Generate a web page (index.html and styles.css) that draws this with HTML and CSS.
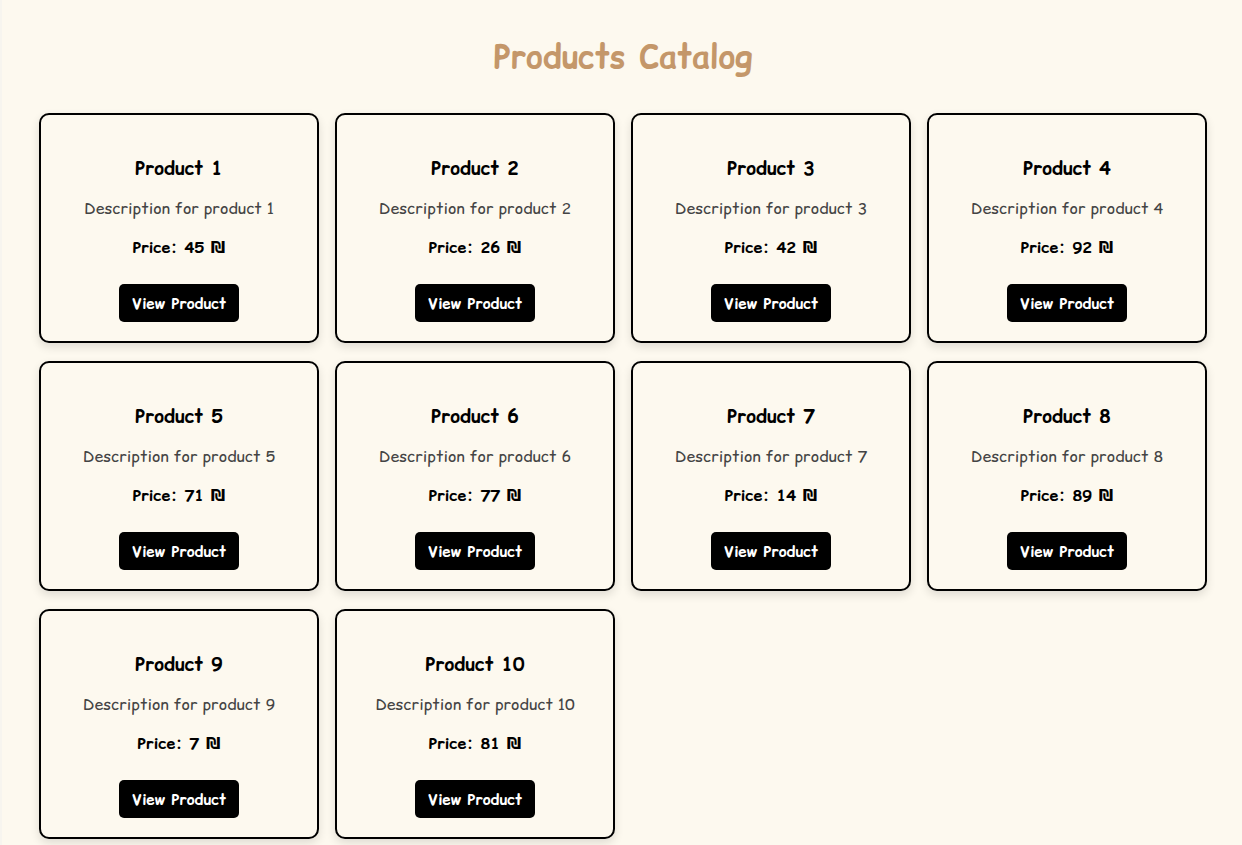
FILE: index.html
```html
<!DOCTYPE html>
<html>
<head>
<meta charset="utf-8">
<link rel="stylesheet" href="styles.css">
</head>
<body>
<div class="page">
  <h1 class="title">Products Catalog</h1>
  <div class="grid">
    <div class="card"><h3>Product 1</h3><p class="desc">Description for product 1</p><p class="price">Price: 45 ₪</p><button class="btn">View Product</button></div>
    <div class="card"><h3>Product 2</h3><p class="desc">Description for product 2</p><p class="price">Price: 26 ₪</p><button class="btn">View Product</button></div>
    <div class="card"><h3>Product 3</h3><p class="desc">Description for product 3</p><p class="price">Price: 42 ₪</p><button class="btn">View Product</button></div>
    <div class="card"><h3>Product 4</h3><p class="desc">Description for product 4</p><p class="price">Price: 92 ₪</p><button class="btn">View Product</button></div>
    <div class="card"><h3>Product 5</h3><p class="desc">Description for product 5</p><p class="price">Price: 71 ₪</p><button class="btn">View Product</button></div>
    <div class="card"><h3>Product 6</h3><p class="desc">Description for product 6</p><p class="price">Price: 77 ₪</p><button class="btn">View Product</button></div>
    <div class="card"><h3>Product 7</h3><p class="desc">Description for product 7</p><p class="price">Price: 14 ₪</p><button class="btn">View Product</button></div>
    <div class="card"><h3>Product 8</h3><p class="desc">Description for product 8</p><p class="price">Price: 89 ₪</p><button class="btn">View Product</button></div>
    <div class="card"><h3>Product 9</h3><p class="desc">Description for product 9</p><p class="price">Price: 7 ₪</p><button class="btn">View Product</button></div>
    <div class="card"><h3>Product 10</h3><p class="desc">Description for product 10</p><p class="price">Price: 81 ₪</p><button class="btn">View Product</button></div>
  </div>
</div>
</body>
</html>
```
FILE: styles.css
```css
html, body {
  margin: 0;
  padding: 0;
  background: #fdf9ef;
}
body {
  font-family: "Comic Relief", "DejaVu Sans", cursive;
  border-left: 2px solid #f7f5ef;
}
.page {
  padding: 20px 35px 20px 37px;
}
.title {
  margin: 16px 0 35px;
  text-align: center;
  font-size: 32px;
  font-weight: bold;
  color: #c4976a;
  line-height: 42px;
}
.grid {
  display: grid;
  grid-template-columns: repeat(4, 1fr);
  column-gap: 16px;
  row-gap: 18px;
}
.card {
  background: #fdf9ef;
  border: 2px solid #000;
  border-radius: 10px;
  box-shadow: 0 4px 10px rgba(0,0,0,0.12);
  height: 230px;
  box-sizing: border-box;
  display: flex;
  flex-direction: column;
  align-items: center;
  padding-top: 40px;
}
.card h3 {
  margin: 0;
  font-size: 18.72px;
  line-height: 26px;
  color: #000;
}
.desc {
  margin: 16px 0 0;
  font-size: 16px;
  line-height: 22px;
  color: #444;
}
.price {
  margin: 17px 0 0;
  font-size: 16px;
  line-height: 22px;
  font-weight: bold;
  color: #000;
}
.btn {
  margin-top: 26px;
  background: #000;
  color: #fff;
  border: none;
  border-radius: 5px;
  font-family: inherit;
  font-size: 15px;
  font-weight: bold;
  padding: 0 13px;
  height: 38px;
}
```
